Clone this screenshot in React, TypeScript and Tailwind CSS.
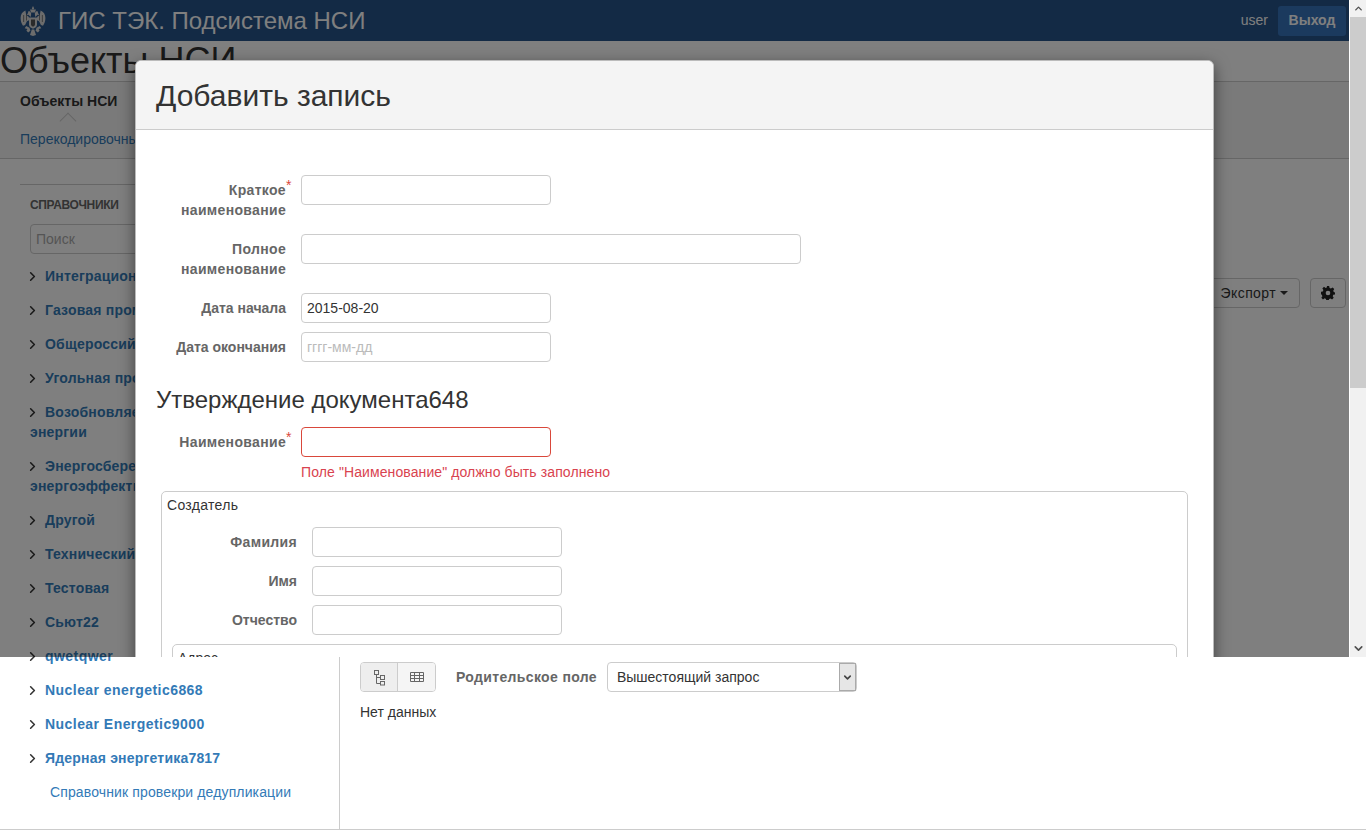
import { ChevronRight, ChevronUp, ChevronDown } from 'lucide-react'

const dictionaries: { name: string; wrap?: string; latin?: boolean }[] = [
  { name: 'Интеграционная' },
  { name: 'Газовая промышленность' },
  { name: 'Общероссийские' },
  { name: 'Угольная промышленность' },
  { name: 'Возобновляемые источники', wrap: 'энергии' },
  { name: 'Энергосбережение и', wrap: 'энергоэффективность' },
  { name: 'Другой' },
  { name: 'Технический' },
  { name: 'Тестовая' },
  { name: 'Сьют22' },
  { name: 'qwetqwer', latin: true },
  { name: 'Nuclear energetic6868', latin: true },
  { name: 'Nuclear Energetic9000', latin: true },
  { name: 'Ядерная энергетика7817' },
]

function Emblem() {
  return (
    <svg width="26" height="30" viewBox="0 0 26 30" className="shrink-0">
      <g fill="#d8d8d8">
        <path d="M13 0l1.200 2.400-1.200 1.400-1.200-1.400z" />
        <path d="M10 3.500h6l-1 3h-4z" />
        <path d="M8.600 5c1.400.3 2.400 1.300 2.600 2.800l-.5 3.200-2.300-2.200-1.700.5.900-1.600z" />
        <path d="M17.400 5c-1.400.3-2.400 1.300-2.600 2.800l.5 3.200 2.300-2.200 1.700.5-.9-1.600z" />
        <path d="M5.400 4.500C2.400 5.600.6 8.500.6 12c0 3 .9 5.700 2.400 7.700l2.100-.6 1.800-3.800L9.500 14l-.8-3.300-2.500-1.600z" />
        <path d="M20.600 4.500c3 1.100 4.800 4 4.800 7.500 0 3-.9 5.700-2.400 7.700l-2.100-.6-1.800-3.800L16.500 14l.8-3.300 2.500-1.600z" />
        <path d="M9 11.500h8v7.200c0 2-1.800 3.300-4 4-2.200-.7-4-2-4-4z" />
        <path d="M6.200 20l3.300 1.800.9 2.900-2.300 1.800-1.700-2 1-1.600-2.700-.7zM19.800 20l-3.300 1.800-.9 2.900 2.300 1.800 1.700-2-1-1.600 2.700-.7z" />
        <path d="M11.800 23.500h2.400l1.800 5.500-3 1-3-1z" />
      </g>
      <g fill="#555555">
        <path d="M11 13.500h4v5c0 1-.9 1.700-2 2.200-1.100-.5-2-1.200-2-2.200z" />
        <rect x="3.400" y="9" width="0.7" height="7" />
        <rect x="21.900" y="9" width="0.7" height="7" />
        <rect x="6" y="8.500" width="0.7" height="6" />
        <rect x="19.300" y="8.500" width="0.7" height="6" />
      </g>
    </svg>
  )
}

function Field({ label, width, value, placeholder, required, invalid, nested, wide }: {
  label: React.ReactNode
  width: string
  value?: string
  placeholder?: string
  required?: boolean
  invalid?: boolean
  nested?: boolean
  wide?: boolean
}) {
  return (
    <div className={`flex gap-[15px] ${nested ? 'pl-[5px]' : 'pl-[20px]'} mb-[9px]`}>
      <label className={`w-[130px] shrink-0 py-[5px] text-right font-bold text-[14px] leading-[20px] text-[#666666] ${wide ? 'tracking-[0.33px]' : ''}`}>
        <span className="relative">
          {label}
          {required && <span className="absolute left-full top-[-7px] text-[14px] font-normal text-[#d9483b]">*</span>}
        </span>
      </label>
      <input
        readOnly
        value={value ?? ''}
        placeholder={placeholder}
        className={`${width} h-[30px] px-[5px] rounded-[4px] border text-[14px] text-[#333333] placeholder:text-[#bbbbbb] outline-none ${
          invalid ? 'border-[#d9483b]' : 'border-[#cccccc]'
        }`}
      />
    </div>
  )
}

function AddRecordModal() {
  return (
    <div className="ml-[135px] mt-[60px] w-[1079px] h-[900px] bg-white rounded-[6px] border border-[#bbbbbb] shadow-[0_5px_15px_rgba(0,0,0,0.5)]">
      <header className="h-[69px] px-[20px] flex items-center bg-[#f4f4f4] border-b border-[#cccccc] rounded-t-[6px]">
        <h2 className="text-[30px] text-[#333333]">Добавить запись</h2>
      </header>
      <div className="pt-[45px]">
        <Field label={<>Краткое<br />наименование</>} width="w-[250px]" required wide />
        <Field label={<>Полное<br />наименование</>} width="w-[500px]" wide />
        <Field label="Дата начала" width="w-[250px]" value="2015-08-20" />
        <Field label="Дата окончания" width="w-[250px]" placeholder="гггг-мм-дд" />
        <h3 className="pl-[20px] mt-[21px] mb-[10px] text-[24px] leading-[34px] text-[#333333]">Утверждение документа648</h3>
        <Field label="Наименование" width="w-[250px]" required invalid wide />
        <p className="pl-[165px] mt-[-4px] text-[14px] leading-[20px] tracking-[0.1px] text-[#d9434f]">Поле "Наименование" должно быть заполнено</p>
        <fieldset className="mt-[9px] ml-[25px] w-[1027px] h-[400px] rounded-[5px] border border-[#cccccc] pt-[3px]">
          <div className="pl-[5px] mb-[12px] text-[14px] leading-[20px] tracking-[0.3px] text-[#333333]">Создатель</div>
          <Field label="Фамилия" width="w-[250px]" nested wide />
          <Field label="Имя" width="w-[250px]" nested />
          <Field label="Отчество" width="w-[250px]" nested />
          <fieldset className="ml-[10px] w-[1005px] h-[100px] rounded-[5px] border border-[#cccccc] pl-[5px] pt-[3px] text-[14px] leading-[20px] text-[#333333]">
            Адрес
          </fieldset>
        </fieldset>
      </div>
    </div>
  )
}

export default function App() {
  return (
    <div className="relative h-[830px] w-[1366px] overflow-hidden bg-white font-['Liberation_Sans',Arial,sans-serif] text-[14px] text-[#333333]">
      {/* Page behind the dialog */}
      <header className="h-[41px] pl-[20px] pr-[20px] flex items-center bg-[#26548a]">
        <Emblem />
        <span className="ml-[12px] text-[24px] text-white">ГИС ТЭК. Подсистема НСИ</span>
        <span className="ml-auto text-[14px] text-white">user</span>
        <button className="ml-[10px] h-[30px] w-[68px] rounded-[3px] bg-[#3674bc] text-[14px] font-bold text-white">Выход</button>
      </header>
      <h1 className="h-[41px] border-b border-[#cccccc] text-[36px] leading-[40px] text-[#333333]">Объекты НСИ</h1>
      <nav className="h-[77px] border-b border-[#cccccc] bg-[#f5f5f5] pl-[20px]">
        <div className="relative pt-[11px] text-[14px] leading-[16px] font-bold text-[#333333]">
          Объекты НСИ
          <span className="absolute left-[42px] top-[33px] w-[12px] h-[12px] rotate-45 border-l border-t border-[#cccccc]" />
        </div>
        <div className="mt-[20px] text-[14px] leading-[20px] text-[#337ab7]">Перекодировочные таблицы</div>
      </nav>
      <div className="flex h-[671px] border-b border-[#cccccc]">
        <aside className="w-[340px] shrink-0 border-r border-[#cccccc] pl-[20px] pr-[20px] pt-[25px]">
          <div className="border-t border-[#cccccc] pl-[10px] pt-[13px]">
            <div className="text-[12px] leading-[14px] font-bold tracking-[-0.35px] text-[#666666]">СПРАВОЧНИКИ</div>
            <input readOnly placeholder="Поиск" className="mt-[12px] w-[280px] h-[30px] px-[5px] rounded-[4px] border border-[#cccccc] text-[14px] placeholder:text-[#aaaaaa] outline-none" />
            <ul className="mt-[12px]">
              {dictionaries.map((d) => (
                <li key={d.name} className={`mb-[14px] text-[14px] leading-[20px] font-bold text-[#337ab7] ${d.latin ? 'tracking-[0.45px]' : 'tracking-[0.2px]'}`}>
                  <div className="flex items-center">
                    <ChevronRight size={15} strokeWidth={2.5} className="text-[#333333] ml-[-5px] mr-[5px] shrink-0" />
                    <span className="whitespace-nowrap">{d.name}</span>
                  </div>
                  {d.wrap && <div>{d.wrap}</div>}
                </li>
              ))}
              <li className="pl-[20px] text-[14px] leading-[20px] tracking-[0.13px] text-[#337ab7]">Справочник провекри дедупликации</li>
            </ul>
          </div>
        </aside>
        <main className="flex-1 pl-[20px] pr-[20px]">
          <div className="flex justify-end gap-[10px] mt-[119px]">
            <button className="h-[30px] pl-[12px] pr-[11px] rounded-[4px] border border-[#cccccc] text-[14px] tracking-[0.4px] text-[#333333] flex items-center gap-[4px]">
              Экспорт <span className="border-x-[4px] border-t-[4px] border-x-transparent border-t-[#333333]" />
            </button>
            <button className="h-[30px] w-[36px] rounded-[4px] border border-[#cccccc] flex items-center justify-center">
              <svg width="14" height="14" viewBox="0 0 24 24" fill="#222222">
                <path fillRule="evenodd" d="M10 0h4l.7 3.300 2.300 1 2.900-1.800 2.800 2.800L21 8.100l.9 2.300L24 11v3.500l-3 .7-.9 2.200 1.700 2.900-2.800 2.800-2.800-1.800-2.300.9-.7 2.800h-4l-.7-2.900-2.200-.9-2.900 1.800-2.800-2.800 1.800-2.800-1-2.300L0 14v-4l3.100-.7 1-2.300-1.800-2.800 2.800-2.800L8 3.300l2.300-1zM12 8a4 4 0 100 8 4 4 0 000-8z" />
              </svg>
            </button>
          </div>
          <div className="mt-[354px] flex items-center">
            <div className="flex h-[30px] w-[76px] rounded-[4px] border border-[#cccccc] overflow-hidden">
              <div className="w-[37px] bg-[#eeeeee] border-r border-[#cccccc] flex items-center justify-center">
                <svg width="14" height="17" viewBox="0 0 14 17" fill="none" stroke="#666666">
                  <rect x="2.500" y="1.500" width="4" height="4" />
                  <rect x="8.500" y="6.500" width="4" height="4" />
                  <rect x="8.500" y="12.500" width="4" height="3.500" />
                  <path d="M4.500 5.500v9h4M4.500 8.500h4" />
                </svg>
              </div>
              <div className="flex-1 bg-[#f5f5f5] flex items-center justify-center">
                <svg width="14" height="12" viewBox="0 0 14 12" fill="none" stroke="#666666">
                  <path d="M.5 1.500h13v9H.5zM.5 4.500h13M.5 7.500h13M4.500 1.500v9M9.500 1.500v9" />
                </svg>
              </div>
            </div>
            <span className="ml-[20px] font-bold tracking-[0.35px] text-[#666666]">Родительское поле</span>
            <div className="ml-[10px] flex h-[30px] w-[250px] rounded-[4px] border border-[#cccccc] items-center pl-[9px] pt-[1px] relative">
              <span className="text-[14px] text-[#333333]">Вышестоящий запрос</span>
              <span className="absolute right-0 top-0 bottom-0 w-[17px] bg-[#e6e6e6] border border-[#aaaaaa] flex items-center justify-center">
                <ChevronDown size={11} strokeWidth={3.5} className="text-[#444444]" />
              </span>
            </div>
          </div>
          <p className="mt-[10px] leading-[20px] text-[#333333]">Нет данных</p>
        </main>
      </div>

      {/* Backdrop and dialog cover only the first viewport */}
      <div className="absolute left-0 top-0 w-[1350px] h-[657px] bg-black/50 overflow-hidden">
        <AddRecordModal />
      </div>
      <div className="absolute right-0 top-0 w-[17px] h-[657px] bg-[#f1f1f1] border-l border-white flex flex-col items-center">
        <ChevronUp size={13} strokeWidth={3} className="text-[#505050] mt-[3px] h-[11px]" />
        <div className="mt-[3px] w-full h-[371px] bg-[#cccccc]" />
        <ChevronDown size={13} strokeWidth={3} className="text-[#505050] mt-auto mb-[2px]" />
      </div>
    </div>
  )
}
